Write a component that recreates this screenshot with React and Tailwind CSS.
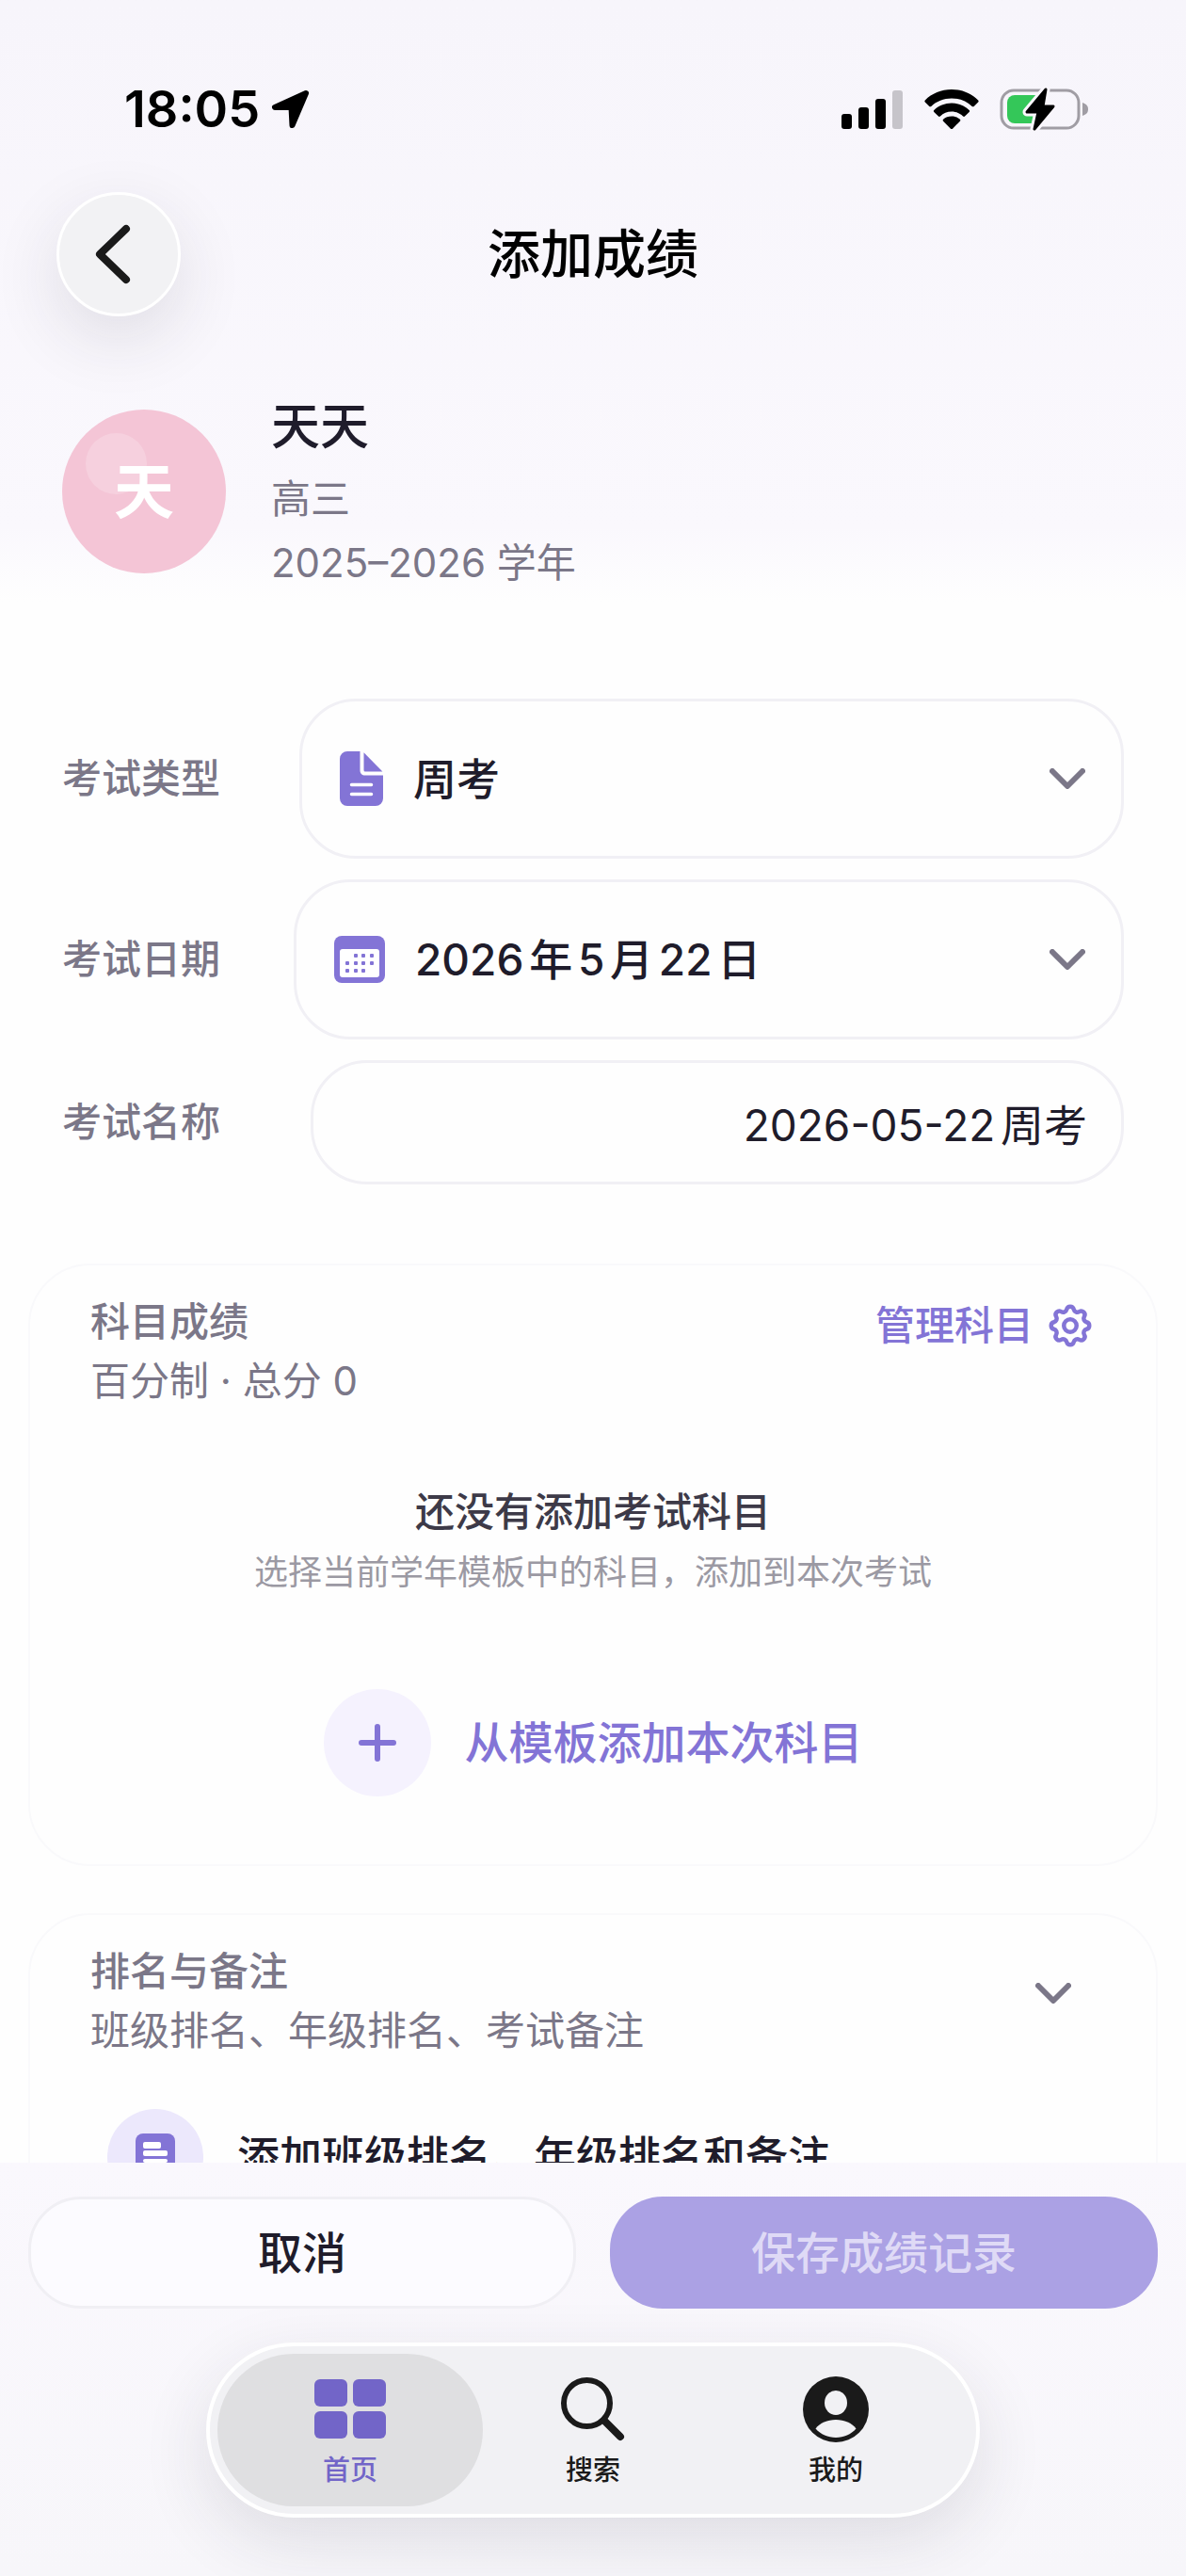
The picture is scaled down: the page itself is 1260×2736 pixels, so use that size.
import { useState } from "react";

const tabs = [
  { id: "home", label: "首页", Icon: GridIcon },
  { id: "search", label: "搜索", Icon: SearchIcon },
  { id: "me", label: "我的", Icon: PersonIcon },
];

function LocationIcon() {
  return (
    <svg viewBox="0 0 42 42" className="size-[42px]" fill="currentColor" stroke="currentColor" strokeWidth="6" strokeLinejoin="round">
      <path d="M37 4 4 19h17.500l1 19Z" />
    </svg>
  );
}

function SignalIcon() {
  return (
    <svg viewBox="0 0 66 42" className="h-[42px] w-[66px]" fill="currentColor">
      <rect x="0" y="26" width="11" height="16" rx="3" />
      <rect x="18" y="19" width="11" height="23" rx="3" />
      <rect x="36" y="10" width="11" height="32" rx="3" />
      <rect x="54" y="1" width="11" height="41" rx="3" fill="#c6c4ca" />
    </svg>
  );
}

function WifiIcon() {
  return (
    <svg viewBox="0 0 58 42" className="h-[42px] w-[58px]" fill="currentColor">
      <path d="M29 0C18 0 8 4.300.800 11.400c-.6.6-.6 1.400 0 2l4.500 4.500c.6.6 1.400.6 2 0C13 12.400 20.500 9.400 29 9.400s16 3 21.700 8.500c.6.600 1.400.600 2 0l4.500-4.500c.6-.6.6-1.400 0-2C50 4.300 40 0 29 0Z" />
      <path d="M29 14.500c-7.200 0-13.800 2.800-18.700 7.400-.6.6-.6 1.400 0 2l4.700 4.600c.5.500 1.300.5 1.900 0C20.200 25.300 24.300 23.500 29 23.500s8.800 1.800 12.100 5c.6.500 1.400.500 1.900 0l4.700-4.600c.6-.6.6-1.400 0-2C42.800 17.300 36.200 14.500 29 14.500Z" />
      <path d="M29 28.500c-3.500 0-6.500 1.200-8.900 3.200-.6.600-.6 1.400 0 2l7.900 8c.6.600 1.400.600 2 0l7.900-8c.6-.6.6-1.400 0-2C35.500 29.700 32.500 28.500 29 28.500Z" />
    </svg>
  );
}

function BatteryIcon() {
  return (
    <svg viewBox="0 0 96 46" className="h-[46px] w-24">
      <rect x="2" y="3" width="82" height="40" rx="13" fill="none" stroke="#a09da4" strokeWidth="3" />
      <path d="M88 16c5 2 6 4 6 7s-1 5-6 7Z" fill="#a09da4" />
      <path d="M16 8h24v30H16a8 8 0 0 1-8-8V16a8 8 0 0 1 8-8Z" fill="#34c759" />
      <path d="M49 2 29 26h12l-4 18 20-24H46Z" fill="#000" stroke="#f9f6fc" strokeWidth="9" paintOrder="stroke" strokeLinejoin="round" />
      <path d="M49 2 29 26h12l-4 18 20-24H46Z" fill="#000" stroke="#000" strokeWidth="3" strokeLinejoin="round" />
    </svg>
  );
}

function ChevronDown() {
  return (
    <svg viewBox="0 0 38 22" className="h-[22px] w-[38px] shrink-0" fill="none" stroke="#7b7788" strokeWidth="6" strokeLinecap="round" strokeLinejoin="round">
      <path d="m3 3 16 16L35 3" />
    </svg>
  );
}

function FileIcon() {
  return (
    <svg viewBox="0 0 46 58" className="h-[58px] w-[46px] shrink-0">
      <path d="M8 0h13.500v20c0 3.500 2 5.500 5.500 5.500h19V50a8 8 0 0 1-8 8H8a8 8 0 0 1-8-8V8a8 8 0 0 1 8-8Z" fill="#8374d6" />
      <path d="M25.500 1.200 45.400 21.500H27a1.500 1.500 0 0 1-1.500-1.500Z" fill="#8374d6" />
      <path d="M12.500 35.500h21M12.500 45.500h21" stroke="#fff" strokeWidth="3.500" strokeLinecap="round" />
    </svg>
  );
}

const calendarDots = [
  [23, 21], [31, 21], [40, 21],
  [14, 29], [23, 29], [31, 29], [40, 29],
  [14, 37], [23, 37], [31, 37],
];

function CalendarIcon() {
  return (
    <svg viewBox="0 0 54 50" className="h-[50px] w-[54px] shrink-0">
      <rect width="54" height="50" rx="8" fill="#8374d6" />
      <rect x="6" y="14" width="42" height="30" rx="3" fill="#fff" />
      {calendarDots.map(([x, y]) => (
        <rect key={`${x}-${y}`} x={x - 2} y={y - 2} width="4" height="4" rx="1" fill="#8374d6" />
      ))}
    </svg>
  );
}

// 八齿齿轮轮廓
function GearIcon() {
  return (
    <svg viewBox="0 0 24 24" className="size-[54px] shrink-0" fill="none" stroke="currentColor" strokeWidth="2" strokeLinecap="round" strokeLinejoin="round">
      <path d="M10.325 4.317c.426-1.756 2.924-1.756 3.350 0a1.724 1.724 0 0 0 2.573 1.066c1.543-.94 3.310.826 2.370 2.370a1.724 1.724 0 0 0 1.065 2.572c1.756.426 1.756 2.924 0 3.350a1.724 1.724 0 0 0-1.066 2.573c.94 1.543-.826 3.310-2.370 2.370a1.724 1.724 0 0 0-2.572 1.065c-.426 1.756-2.924 1.756-3.350 0a1.724 1.724 0 0 0-2.573-1.066c-1.543.94-3.310-.826-2.370-2.370a1.724 1.724 0 0 0-1.065-2.572c-1.756-.426-1.756-2.924 0-3.350a1.724 1.724 0 0 0 1.066-2.573c-.94-1.543.826-3.310 2.370-2.370 1 .608 2.296.070 2.572-1.065Z" />
      <circle cx="12" cy="12" r="3" />
    </svg>
  );
}

function PlusIcon() {
  return (
    <svg viewBox="0 0 40 40" className="size-10" fill="none" stroke="#8374d6" strokeWidth="6" strokeLinecap="round">
      <path d="M20 3v34M3 20h34" />
    </svg>
  );
}

function NoteIcon() {
  return (
    <svg viewBox="0 0 42 50" className="h-[50px] w-[42px]">
      <rect width="42" height="50" rx="8" fill="#8374d6" />
      <rect x="8" y="9" width="19" height="7" rx="2" fill="#fff" />
      <rect x="8" y="18" width="26" height="6" rx="2" fill="#fff" />
      <rect x="8" y="27" width="26" height="4" rx="2" fill="#fff" />
    </svg>
  );
}

function GridIcon() {
  return (
    <svg viewBox="0 0 76 64" className="h-16 w-[76px]" fill="currentColor">
      <rect width="35" height="29" rx="6" />
      <rect x="41" width="35" height="29" rx="6" />
      <rect y="34" width="35" height="29" rx="6" />
      <rect x="41" y="34" width="35" height="29" rx="6" />
    </svg>
  );
}

function SearchIcon() {
  return (
    <svg viewBox="0 0 68 68" className="size-[68px]" fill="none" stroke="currentColor">
      <circle cx="27.500" cy="27.500" r="24.500" strokeWidth="6" />
      <path d="m46 46 17 17" strokeWidth="8" strokeLinecap="round" />
    </svg>
  );
}

function PersonIcon() {
  return (
    <svg viewBox="0 0 70 70" className="size-[70px]">
      <circle cx="35" cy="35" r="35" fill="currentColor" />
      <ellipse cx="35" cy="28" rx="12" ry="13" fill="#f1f1f4" />
      <path d="M13.500 55.500C18 49.500 26 46 35 46s17 3.500 21.500 9.500C51 61.500 43.500 65 35 65s-16-3.500-21.500-9.500Z" fill="#f1f1f4" />
    </svg>
  );
}

function StatusBar() {
  return (
    <div className="flex h-[176px] shrink-0 items-center justify-between pt-14 pr-[102px] pl-[132px] text-black">
      <div className="flex items-center gap-3">
        <span className="text-[54px] leading-[56px] font-semibold">18:05</span>
        <LocationIcon />
      </div>
      <div className="flex items-center gap-[22px]">
        <SignalIcon />
        <WifiIcon />
        <BatteryIcon />
      </div>
    </div>
  );
}

export default function App() {
  const [tipo, setTipo] = useState("周考");
  const [nombre, setNombre] = useState("2026-05-22周考");
  const [activeTab, setActiveTab] = useState("home");

  return (
    <div className="flex h-screen flex-col bg-[#fefefe] bg-linear-to-b from-[#f7f5fb] via-[#faf8fd] via-[560px] to-[#fefefe] to-[640px] font-[Inter,'Noto_Sans_CJK_SC',sans-serif] text-[#1f1c2b] [text-autospace:normal]">
      <StatusBar />

      {/* 标题栏 */}
      <header className="grid shrink-0 grid-cols-[132px_1fr_132px] items-center px-[60px] pt-7">
        <button
          type="button"
          aria-label="返回"
          className="flex size-[132px] items-center justify-center rounded-full border-3 border-white bg-[#f2f2f4] pr-3 text-[#1a1a1a] shadow-[0_24px_72px_rgba(40,40,60,0.12)]"
        >
          <svg viewBox="0 0 38 64" className="h-16 w-[38px]" fill="none" stroke="currentColor" strokeWidth="8" strokeLinecap="round" strokeLinejoin="round">
            <path d="M33 5 5 32l28 27" />
          </svg>
        </button>
        <h1 className="text-center text-[56px] leading-[64px] font-medium text-black">添加成绩</h1>
      </header>

      <main className="min-h-0 flex-1 overflow-y-auto [scrollbar-width:none]">
        {/* 学生信息 */}
        <section className="flex items-center gap-12 px-[66px] pt-[76px]">
          <div className="relative flex size-[174px] shrink-0 items-center justify-center rounded-full bg-[#f4c5d6]">
            <span className="absolute top-[25px] left-[25px] size-[65px] rounded-full bg-white/20" />
            <span className="relative text-[64px] leading-[72px] font-bold text-white">天</span>
          </div>
          <div>
            <h2 className="text-[52px] leading-[84px] font-medium">天天</h2>
            <p className="text-[42px] leading-[68px] text-[#7b7788]">高三</p>
            <p className="text-[42px] leading-[68px] text-[#7b7788]">2025–2026 学年</p>
          </div>
        </section>

        {/* 考试信息 */}
        <form className="flex flex-col gap-[22px] px-[66px] pt-[110px]" onSubmit={(e) => e.preventDefault()}>
          <div className="flex items-center">
            <label htmlFor="tipo" className="shrink-0 text-[42px] leading-[60px] font-medium text-[#7b7788]">
              考试类型
            </label>
            <div className="ml-[84px] flex h-[170px] flex-1 items-center rounded-[60px] border-3 border-[#f1f0f5] pr-[38px] pl-10">
              <FileIcon />
              <select
                id="tipo"
                value={tipo}
                onChange={(e) => setTipo(e.target.value)}
                className="ml-8 min-w-0 flex-1 appearance-none bg-transparent text-[46px] leading-[60px] font-medium outline-none"
              >
                <option>周考</option>
              </select>
              <ChevronDown />
            </div>
          </div>
          <div className="flex items-center">
            <label htmlFor="fecha" className="shrink-0 text-[42px] leading-[60px] font-medium text-[#7b7788]">
              考试日期
            </label>
            <button id="fecha" type="button" className="ml-[78px] flex h-[170px] flex-1 items-center rounded-[60px] border-3 border-[#f1f0f5] pr-[38px] pl-10">
              <CalendarIcon />
              <span className="ml-8 flex-1 text-left text-[46px] leading-[60px] font-medium">2026年5月22日</span>
              <ChevronDown />
            </button>
          </div>
          <div className="flex items-center">
            <label htmlFor="nombre" className="shrink-0 text-[42px] leading-[60px] font-medium text-[#7b7788]">
              考试名称
            </label>
            <input
              id="nombre"
              type="text"
              value={nombre}
              onChange={(e) => setNombre(e.target.value)}
              className="ml-24 h-[132px] min-w-0 flex-1 rounded-[60px] border-3 border-[#f1f0f5] px-9 text-right text-[46px] leading-[60px] outline-none [text-autospace:normal]"
            />
          </div>
        </form>

        {/* 科目成绩 */}
        <section className="mx-[30px] mt-[84px] rounded-[66px] border-2 border-[#f9f9fb] px-16 pt-7 pb-[72px]">
          <div className="flex items-start justify-between">
            <div>
              <h3 className="text-[42px] leading-[63px] font-medium text-[#7b7788]">科目成绩</h3>
              <p className="text-[42px] leading-[63px] text-[#7b7788]">百分制 · 总分 0</p>
            </div>
            <button type="button" className="mt-1 flex items-center gap-3 text-[42px] leading-[63px] font-medium text-[#8374d6]">
              管理科目
              <GearIcon />
            </button>
          </div>
          <div className="mt-[76px] text-center">
            <p className="text-[42px] leading-[64px] font-medium text-[#3d3a48]">还没有添加考试科目</p>
            <p className="text-[36px] leading-[64px] text-[#9b99a3]">选择当前学年模板中的科目，添加到本次考试</p>
          </div>
          <button type="button" className="mx-auto mt-[92px] flex items-center gap-9 text-[47px] leading-[64px] font-medium text-[#8374d6]">
            <span className="flex size-[114px] items-center justify-center rounded-full bg-[#f5f2fe]">
              <PlusIcon />
            </span>
            从模板添加本次科目
          </button>
        </section>

        {/* 排名与备注 */}
        <section className="mx-[30px] mt-[50px] rounded-[66px] border-2 border-[#f9f9fb] px-16 pt-7 pb-16">
          <div className="flex items-center justify-between pr-[26px]">
            <div>
              <h3 className="text-[42px] leading-[63px] font-medium text-[#7b7788]">排名与备注</h3>
              <p className="text-[42px] leading-[63px] text-[#7b7788]">班级排名、年级排名、考试备注</p>
            </div>
            <button type="button" aria-label="展开" className="mb-4">
              <ChevronDown />
            </button>
          </div>
          <div className="mt-[52px] flex items-center gap-9 pl-[18px]">
            <span className="flex size-[102px] shrink-0 items-center justify-center rounded-full bg-[#ece8fc]">
              <NoteIcon />
            </span>
            <p className="text-[45px] leading-[64px] font-medium">添加班级排名、年级排名和备注</p>
          </div>
        </section>
      </main>

      {/* 底部操作与导航 */}
      <footer className="shrink-0 bg-linear-to-b from-[#faf8fd] to-[#f7f6fa] px-[30px] pt-9 pb-[62px]">
        <div className="grid grid-cols-2 gap-9">
          <button type="button" className="h-[119px] rounded-[56px] border-3 border-[#f0eff4] bg-[#fcfbff] text-[47px] leading-[64px] font-medium">
            取消
          </button>
          <button type="button" disabled className="h-[119px] rounded-[56px] bg-[#aba1e4] text-[47px] leading-[64px] font-medium text-[#dfdaf6]">
            保存成绩记录
          </button>
        </div>
        <nav className="mx-auto mt-9 flex w-fit rounded-full border-4 border-white bg-[#f1f1f4] p-2 shadow-[0_24px_72px_rgba(40,40,60,0.12)]">
          {tabs.map(({ id, label, Icon }) => (
            <button
              key={id}
              type="button"
              onClick={() => setActiveTab(id)}
              className={`flex h-[162px] w-[282px] flex-col items-center rounded-full pt-6 not-first:-ml-6 ${
                activeTab === id ? "bg-[#dfdfe1] text-[#7265c8]" : "text-[#1a1a1a]"
              }`}
            >
              <span className="flex h-[70px] items-center">
                <Icon />
              </span>
              <span className="mt-[10px] text-[29px] leading-10 font-medium">{label}</span>
            </button>
          ))}
        </nav>
      </footer>
    </div>
  );
}
